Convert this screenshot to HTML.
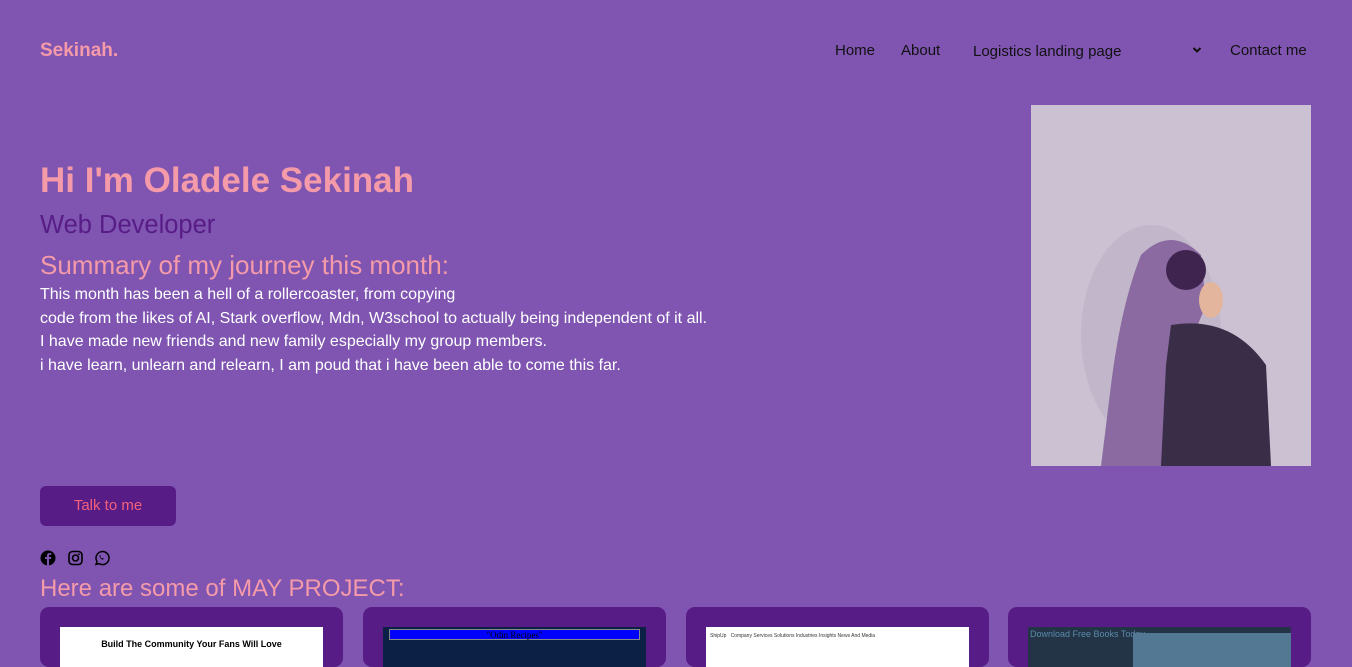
<!DOCTYPE html>
<html><head><meta charset="utf-8"><style>
*{margin:0;padding:0;box-sizing:border-box}
body{width:1352px;height:646px;overflow:hidden;background:#7f55b1;font-family:"Liberation Sans",sans-serif;position:relative}
.logo{position:absolute;left:40px;top:40px;color:#f49aa9;font-weight:bold;font-size:19px}
.nav{position:absolute;top:42px;font-size:15px;color:#111}
h1{position:absolute;left:40px;top:161px;font-size:35px;color:#f49aa9;font-weight:bold}
.h2{position:absolute;left:40px;top:211px;font-size:25.5px;color:#581c87}
.h3{position:absolute;left:40px;top:250px;font-size:26px;color:#f49aa9}
.p{position:absolute;left:40px;top:283px;font-size:16px;color:#fff;line-height:23.5px}
.btn{position:absolute;left:40px;top:486px;width:136px;height:40px;background:#581c87;border-radius:6px;color:#f2607a;font-size:15px;text-align:center;line-height:40px}
.proj{position:absolute;left:40px;top:575px;font-size:24px;color:#f49aa9}
.card{position:absolute;top:607px;width:303px;height:60px;background:#581c87;border-radius:9px}
.shot{position:absolute;left:20px;top:20px;width:263px;height:40px}
</style></head><body>
<div class="logo">Sekinah.</div>
<div class="nav" style="left:835px">Home</div>
<div class="nav" style="left:901px">About</div>
<div class="nav" style="left:973px;top:43px">Logistics landing page</div>
<svg style="position:absolute;left:1192px;top:46px" width="10" height="8" viewBox="0 0 10 8"><path d="M1.5 2l3.5 3.5L8.5 2" fill="none" stroke="#111" stroke-width="2"/></svg>
<div class="nav" style="left:1230px">Contact me</div>
<h1>Hi I'm Oladele Sekinah</h1>
<div class="h2">Web Developer</div>
<div class="h3">Summary of my journey this month:</div>
<div class="p">This month has been a hell of a rollercoaster, from copying<br>code from the likes of AI, Stark overflow, Mdn, W3school to actually being independent of it all.<br>I have made new friends and new family especially my group members.<br>i have learn, unlearn and relearn, I am poud that i have been able to come this far.</div>
<svg style="position:absolute;left:1031px;top:105px" width="280" height="361" viewBox="0 0 280 361">
<rect width="280" height="361" fill="#cbc1d2"/>
<ellipse cx="120" cy="230" rx="70" ry="110" fill="#bcb0c4" opacity=".6"/>
<path d="M110 150 Q140 120 170 150 L175 200 L150 260 L140 361 L70 361 L80 280 Q90 200 110 150Z" fill="#8a6aa0"/>
<path d="M140 220 Q200 210 235 260 L240 361 L130 361 L135 260Z" fill="#3a2d48"/>
<circle cx="155" cy="165" r="20" fill="#3f2450"/>
<ellipse cx="180" cy="195" rx="12" ry="18" fill="#e3b59c"/>
</svg>
<div class="btn">Talk to me</div>
<svg style="position:absolute;left:40px;top:550px" width="72" height="16" viewBox="0 0 72 16">
<circle cx="8" cy="8" r="7.5" fill="#000"/><path d="M9 16V9h2l.3-2H9V5.8c0-.6.2-1 1-1h1.3V3h-1.8C7.8 3 7 4 7 5.6V7H5v2h2v7z" fill="#7f55b1"/>
<rect x="29" y="1.5" width="13" height="13" rx="3.5" fill="none" stroke="#000" stroke-width="1.6"/><circle cx="35.5" cy="8" r="3" fill="none" stroke="#000" stroke-width="1.6"/><circle cx="39" cy="4.3" r=".9"/>
<path d="M56 14.5l1-3a6.5 6.5 0 1 1 2.3 2.2z" fill="none" stroke="#000" stroke-width="1.5"/><path d="M59.5 5.5c0 2 1.5 3.8 3.5 4.3l.8-1-1.2-.8-.6.5c-.8-.4-1.4-1-1.7-1.8l.5-.6-.8-1.2z"/>
</svg>
<div class="proj">Here are some of MAY PROJECT:</div>
<div class="card" style="left:40px"><div class="shot" style="background:#fff"><div style="font-size:9px;font-weight:bold;text-align:center;margin-top:12px;color:#000">Build The Community Your Fans Will Love</div></div></div>
<div class="card" style="left:363px"><div class="shot" style="background:#0c1f45"><div style="margin:2px 6px;height:11px;background:#00f;border:1px solid #888;font:9px 'Liberation Serif',serif;text-align:center;color:#000">"Odin Recipes"</div></div></div>
<div class="card" style="left:686px"><div class="shot" style="background:#fff;font-size:5px;padding:6px 4px;color:#333">ShipUp &nbsp; Company Services Solutions Industries Insights News And Media</div></div>
<div class="card" style="left:1008px"><div class="shot" style="background:#233446"><div style="font-size:9px;color:#5a8aa8;padding:2px">Download Free Books Today</div><div style="position:absolute;left:105px;top:6px;width:158px;height:34px;background:#537894"></div></div></div>
</body></html>
